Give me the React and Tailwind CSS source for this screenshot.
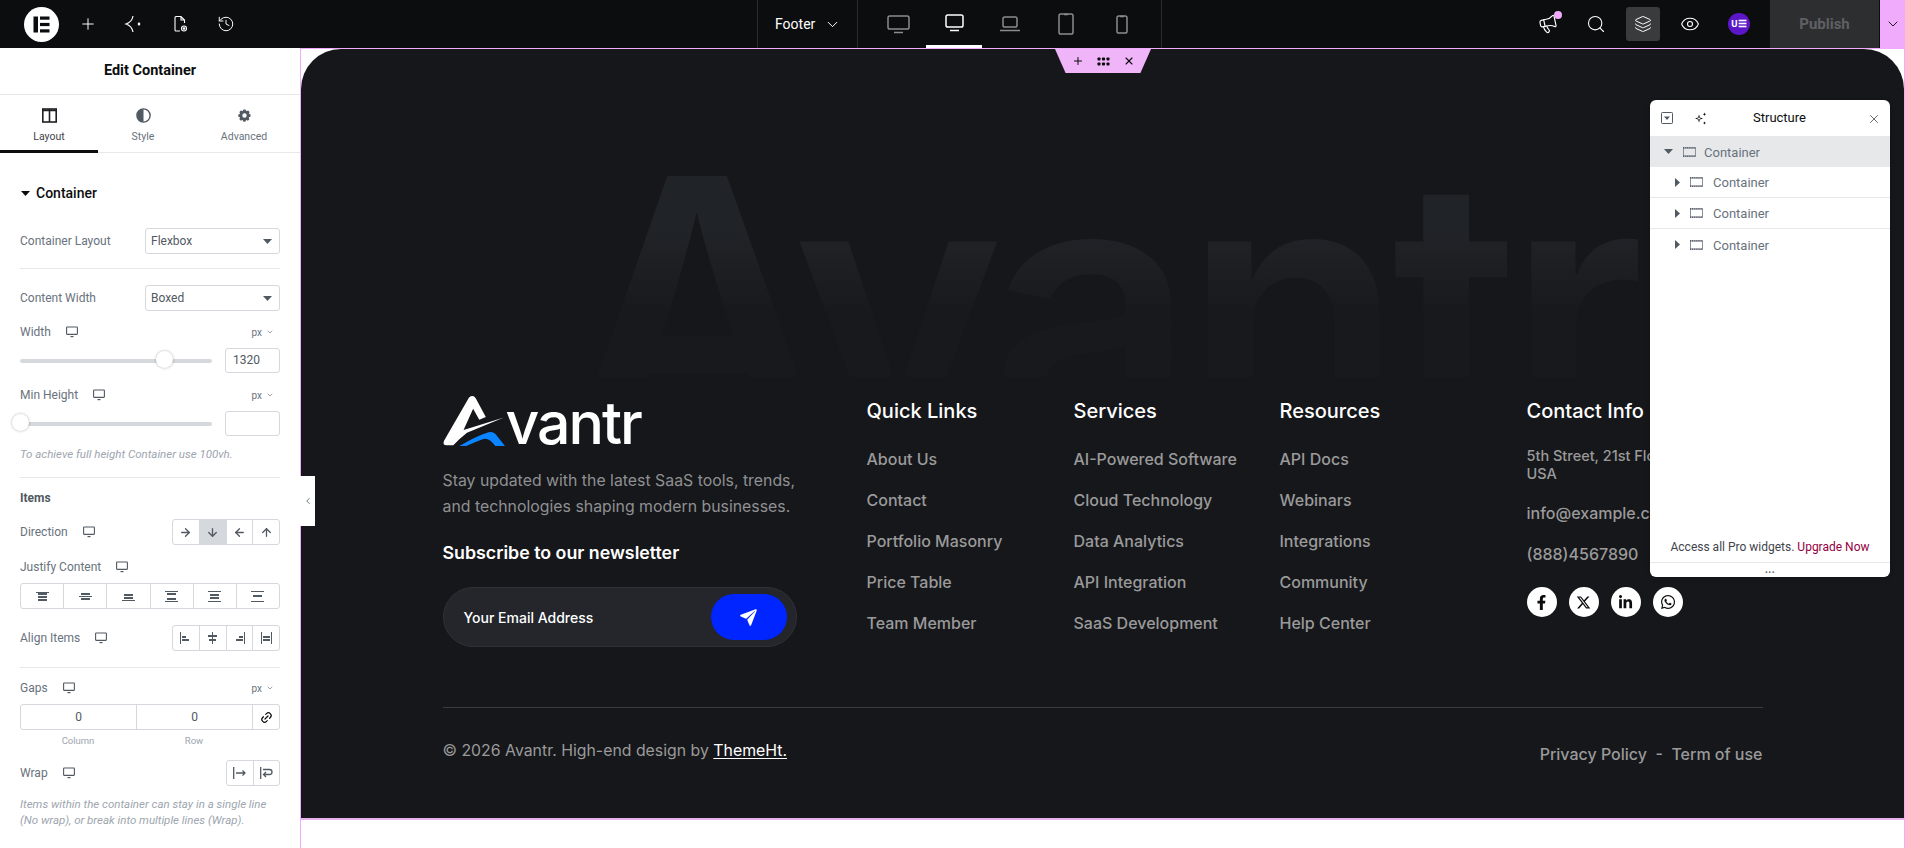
import { ArrowRight, ArrowDown, ArrowLeft, ArrowUp, ChevronDown, ChevronLeft, Plus, Search, Eye, History, Layers, Megaphone, X, Link2 } from "lucide-react";
import { FaFacebookF, FaLinkedinIn, FaWhatsapp } from "react-icons/fa";
import { FaXTwitter } from "react-icons/fa6";
import { IoPaperPlane } from "react-icons/io5";

const quickLinks = ["About Us", "Contact", "Portfolio Masonry", "Price Table", "Team Member"];
const services = ["AI-Powered Software", "Cloud Technology", "Data Analytics", "API Integration", "SaaS Development"];
const resources = ["API Docs", "Webinars", "Integrations", "Community", "Help Center"];

const Monitor = () => (
  <svg width="12" height="12" viewBox="0 0 12 12" fill="none" stroke="#515962" strokeWidth="1.1">
    <rect x="0.6" y="1" width="10.8" height="7.4" rx="0.6" />
    <path d="M4.5 10.6h3" strokeWidth="1.2" />
  </svg>
);

const Caret = ({ className }) => (
  <svg width="9" height="5" viewBox="0 0 9 5" className={className}><path d="M0 0h9L4.5 5z" fill="currentColor" /></svg>
);

const CaretRight = () => (
  <svg width="5" height="9" viewBox="0 0 5 9"><path d="M0 0l5 4.5L0 9z" fill="#515962" /></svg>
);

const ContainerIcon = () => (
  <svg width="13" height="10" viewBox="0 0 13 10" fill="none">
    <rect x="0.5" y="1" width="12" height="8" stroke="#8a9099" strokeWidth="1" />
    <path d="M0 0.8h13M0 9.2h13" stroke="#515962" strokeWidth="1.5" strokeDasharray="1.2 0.9" />
  </svg>
);

const Device = ({ w, h, screen, base, color }) => (
  <svg width={w} height={h} viewBox={`0 0 ${w} ${h}`} fill="none" stroke={color} strokeWidth="1.5">
    <rect x={screen[0]} y={screen[1]} width={screen[2]} height={screen[3]} rx="1.8" />
    {base}
  </svg>
);

const SliderRow = ({ percent, value }) => (
  <div className="flex items-center mt-[8px] h-[25px]">
    <div className="relative w-[192px] h-[4px] rounded-full bg-[#d5d8dc]">
      <div className="absolute top-[-7.5px] w-[17px] h-[17px] rounded-full bg-white shadow-[0_0_3px_rgba(0,0,0,0.3)]" style={{ left: `${percent}%`, marginLeft: "-8px" }} />
    </div>
    <div className="ml-auto w-[55px] h-[25px] border border-[#d5d8dc] rounded-[3px] pl-[7px] text-[12px] leading-[23px] text-[#515962]">{value}</div>
  </div>
);

const Label = ({ text, unit, className = "" }) => (
  <div className={`flex items-center h-[16px] text-[12px] text-[#69727d] ${className}`}>
    <span>{text}</span>
    <span className="ml-[15px] flex"><Monitor /></span>
    {unit && (
      <span className="ml-auto mr-[6px] flex items-center gap-[4px] text-[10px] text-[#69727d]">px <ChevronDown size={8} strokeWidth={2} /></span>
    )}
  </div>
);

const Select = ({ text }) => (
  <div className="ml-auto w-[135px] h-[26px] border border-[#d5d8dc] rounded-[3px] px-[5px] flex items-center justify-between text-[12px] text-[#515962]">
    {text}
    <Caret className="text-[#515962] mr-[2px]" />
  </div>
);

const Segments = ({ children, className = "" }) => (
  <div className={`flex h-[26px] border border-[#d5d8dc] rounded-[3px] divide-x divide-[#d5d8dc] overflow-hidden ${className}`}>{children}</div>
);

const Seg = ({ children, active }) => (
  <div className={`flex-1 flex items-center justify-center text-[#515962] ${active ? "bg-[#d5d8dc] text-[#0c0d0e]" : ""}`}>{children}</div>
);

const JustifyIcon = ({ lines, blocks }) => (
  <svg width="13" height="11" viewBox="0 0 13 11" fill="#515962">
    {lines.map((y) => <rect key={y} x="0" y={y} width="13" height="1" />)}
    {blocks.map((y) => <rect key={y} x="2" y={y} width="9" height="2" />)}
  </svg>
);

const AlignIcon = ({ lines, blocks }) => (
  <svg width="11" height="12" viewBox="0 0 11 12" fill="#515962">
    {lines.map((x) => <rect key={x} x={x} y="0" width="1" height="12" />)}
    {blocks.map(([x, y, bw]) => <rect key={y + "-" + x} x={x} y={y} width={bw} height="2" />)}
  </svg>
);

const Divider = ({ className = "" }) => <div className={`h-px bg-[#e6e8ea] ${className}`} />;

const LeftPanel = () => (
  <aside className="w-[300px] shrink-0 bg-white font-['Roboto',sans-serif] overflow-hidden">
    <div className="h-[47px] flex items-center justify-center text-[14.5px] font-bold text-[#0c0d0e] border-b border-[#e6e8ea]">Edit Container</div>
    <div className="relative h-[58px] flex border-b border-[#e6e8ea]">
      <div className="w-[98px] flex flex-col items-center pt-[13px] border-b-[3px] border-[#0c0d0e] h-[58px]">
        <svg width="15" height="15" viewBox="0 0 15 15" fill="none" stroke="#1f2124" strokeWidth="1.6"><rect x="0.8" y="1" width="13.4" height="13" /><path d="M0.8 2.4h13.4M7.5 1v13" /></svg>
        <span className="mt-[7px] text-[10.5px] leading-[13px] text-[#3f444b]">Layout</span>
      </div>
      <div className="w-[90px] flex flex-col items-center pt-[13px]">
        <svg width="15" height="15" viewBox="0 0 15 15"><circle cx="7.5" cy="7.5" r="6.6" fill="none" stroke="#515962" strokeWidth="1.4" /><path d="M7.5 1a6.5 6.5 0 0 0 0 13z" fill="#515962" /></svg>
        <span className="mt-[7px] text-[10.5px] leading-[13px] text-[#69727d]">Style</span>
      </div>
      <div className="w-[112px] flex flex-col items-center pt-[13px]">
        <svg width="15" height="15" viewBox="0 0 24 24" fill="#515962"><path d="M12 8.5a3.5 3.5 0 1 0 0 7 3.5 3.5 0 0 0 0-7zm9.4 5.3l-2.3 1-.3.8 1 2.3-2.4 2.4-2.3-1-.8.3-1 2.4H10.300l-1-2.400-.8-.3-2.300 1-2.400-2.400 1-2.300-.3-.8-2.400-1v-3.400l2.400-1 .3-.8-1-2.300 2.400-2.400 2.300 1 .8-.3 1-2.400h3.400l1 2.400.8.3 2.300-1 2.400 2.400-1 2.300.3.800 2.400 1z" fillRule="evenodd" /></svg>
        <span className="mt-[7px] text-[10.5px] leading-[13px] text-[#69727d]">Advanced</span>
      </div>
    </div>

    <div className="px-[20px]">
      <div className="mt-[32px] h-[16px] flex items-center text-[#0c0d0e] text-[14px] font-medium">
        <Caret className="mr-[6px] ml-px" />
        Container
      </div>
      <div className="mt-[27px] flex items-center h-[26px] text-[12px] text-[#69727d]">Container Layout<Select text="Flexbox" /></div>
      <Divider className="mt-[14px]" />
      <div className="mt-[16px] flex items-center h-[26px] text-[12px] text-[#69727d]">Content Width<Select text="Boxed" /></div>
      <Label text="Width" unit className="mt-[13px]" />
      <SliderRow percent={75} value="1320" />
      <Label text="Min Height" unit className="mt-[14px]" />
      <SliderRow percent={0} value="" />
      <div className="mt-[10px] text-[11.5px] leading-[16px] italic text-[#9da5ae]">To achieve full height Container use 100vh.</div>
      <Divider className="mt-[15px]" />
      <div className="mt-[12px] h-[16px] text-[12px] font-bold text-[#515962] leading-[16px]">Items</div>
      <div className="mt-[13px] flex items-center h-[26px]">
        <Label text="Direction" />
        <Segments className="ml-auto w-[108px]">
          <Seg><ArrowRight size={13} strokeWidth={2.4} /></Seg>
          <Seg active><ArrowDown size={13} strokeWidth={2.4} /></Seg>
          <Seg><ArrowLeft size={13} strokeWidth={2.4} /></Seg>
          <Seg><ArrowUp size={13} strokeWidth={2.4} /></Seg>
        </Segments>
      </div>
      <Label text="Justify Content" className="mt-[14px]" />
      <Segments className="mt-[8px]">
        <Seg><JustifyIcon lines={[1]} blocks={[2, 5, 8]} /></Seg>
        <Seg><JustifyIcon lines={[5]} blocks={[2, 7]} /></Seg>
        <Seg><JustifyIcon lines={[9]} blocks={[3, 6]} /></Seg>
        <Seg><JustifyIcon lines={[0, 10]} blocks={[2, 7]} /></Seg>
        <Seg><JustifyIcon lines={[0, 10]} blocks={[3, 6]} /></Seg>
        <Seg><JustifyIcon lines={[0, 10]} blocks={[4]} /></Seg>
      </Segments>
      <div className="mt-[16px] flex items-center h-[26px]">
        <Label text="Align Items" />
        <Segments className="ml-auto w-[108px]">
          <Seg><AlignIcon lines={[0]} blocks={[[2, 4, 4], [2, 7, 7]]} /></Seg>
          <Seg><AlignIcon lines={[5]} blocks={[[1, 3, 9], [2, 7, 7]]} /></Seg>
          <Seg><AlignIcon lines={[10]} blocks={[[5, 4, 4], [2, 7, 7]]} /></Seg>
          <Seg><AlignIcon lines={[0, 10]} blocks={[[2, 4, 7], [2, 7, 7]]} /></Seg>
        </Segments>
      </div>
      <Divider className="mt-[16px]" />
      <Label text="Gaps" unit className="mt-[12px]" />
      <div className="mt-[8px] flex h-[26px] border border-[#d5d8dc] rounded-[3px] divide-x divide-[#d5d8dc] text-[12px] text-[#515962]">
        <div className="w-[116px] flex items-center justify-center">0</div>
        <div className="w-[116px] flex items-center justify-center">0</div>
        <div className="flex-1 flex items-center justify-center text-[#0c0d0e]"><Link2 size={13} strokeWidth={2.2} className="-rotate-45" /></div>
      </div>
      <div className="flex mt-[3px] text-[9.5px] leading-[16px] text-[#9da5ae]">
        <span className="w-[116px] text-center">Column</span>
        <span className="w-[116px] text-center">Row</span>
      </div>
      <div className="mt-[11px] flex items-center h-[26px]">
        <Label text="Wrap" />
        <Segments className="ml-auto w-[54px]">
          <Seg>
            <svg width="13" height="12" viewBox="0 0 13 12" fill="none" stroke="#515962" strokeWidth="1.3"><path d="M0.700 0v12M3 6h9M9.500 3.500L12 6l-2.500 2.500" /></svg>
          </Seg>
          <Seg>
            <svg width="13" height="12" viewBox="0 0 13 12" fill="none" stroke="#515962" strokeWidth="1.3"><path d="M0.700 0v12M3 2.500h6.500a2.500 2.500 0 0 1 0 5H3.500M6 5L3.500 7.500 6 10" /></svg>
          </Seg>
        </Segments>
      </div>
      <div className="mt-[10px] text-[11.5px] leading-[16px] italic text-[#9da5ae]">Items within the container can stay in a single line (No wrap), or break into multiple lines (Wrap).</div>
    </div>
  </aside>
);

const TopBar = () => (
  <header className="h-[48px] shrink-0 bg-[#0c0d0e] flex items-center text-white font-['Roboto',sans-serif]">
    <div className="ml-[24px] w-[35px] h-[35px] rounded-full bg-white flex items-center justify-center">
      <svg width="17" height="17" viewBox="0 0 17 17" fill="#0c0d0e"><rect x="0.500" y="0.500" width="4.500" height="16" /><rect x="7" y="0.500" width="9.500" height="3.200" /><rect x="7" y="6.900" width="9.500" height="3.200" /><rect x="7" y="13.300" width="9.500" height="3.200" /></svg>
    </div>
    <Plus size={18} strokeWidth={1.3} className="ml-[20px]" />
    <svg width="18" height="18" viewBox="0 0 18 18" fill="none" stroke="white" strokeWidth="1.200" className="ml-[27px]"><path d="M9 1Q8 7 2 9Q8 11 9 17" /><path d="M15 7l1.500 2-1.500 2-1.500-2z" fill="white" stroke="none" /></svg>
    <svg width="18" height="18" viewBox="0 0 18 18" fill="none" stroke="white" strokeWidth="1.100" className="ml-[29px]"><path d="M9 16H5a1 1 0 0 1-1-1V2.500a1 1 0 0 1 1-1h5l3.500 3.500v3M10 1.500V5h3.500" /><circle cx="13" cy="13.500" r="2.500" /><circle cx="13" cy="13.500" r="0.800" fill="white" /></svg>
    <History size={18} strokeWidth={1.3} className="ml-[28px]" />
    <div className="ml-[522px] w-[101px] h-[48px] flex items-center border-x border-[#2a2b2d] pl-[17px] text-[14px]">
      Footer
      <ChevronDown size={17} strokeWidth={1.4} className="ml-[9px]" />
    </div>
    <div className="w-[304px] h-[48px] flex border-r border-[#2a2b2d] pl-[12px]">
      <div className="w-[56px] h-[48px] flex items-center justify-center">
        <Device w={23} h={19} screen={[1, 1, 21, 13]} color="#8a8c8f" base={<path d="M7 17.500h9" />} />
      </div>
      <div className="w-[56px] h-[48px] flex items-center justify-center border-b-[3px] border-white">
        <Device w={19} h={18} screen={[1, 1, 17, 12]} color="#ffffff" base={<path d="M5 16.500h9" />} />
      </div>
      <div className="w-[56px] h-[48px] flex items-center justify-center">
        <Device w={20} h={16} screen={[3, 1, 14, 10]} color="#8a8c8f" base={<path d="M0 14.500h20" />} />
      </div>
      <div className="w-[56px] h-[48px] flex items-center justify-center">
        <Device w={16} h={22} screen={[1, 1, 14, 20]} color="#8a8c8f" base={<path d="M6 1.500h4" />} />
      </div>
      <div className="w-[56px] h-[48px] flex items-center justify-center">
        <Device w={12} h={19} screen={[1, 1, 10, 17]} color="#8a8c8f" base={<path d="M4 1.500h4" />} />
      </div>
    </div>
    <div className="ml-auto flex items-center h-[48px]">
      <div className="relative mr-[28px]">
        <Megaphone size={20} strokeWidth={1.400} className="-rotate-12" />
        <span className="absolute -top-[3px] -right-[4px] w-[8px] h-[8px] rounded-full bg-[#f0abfc]" />
      </div>
      <Search size={20} strokeWidth={1.300} className="mr-[20px]" />
      <div className="w-[34px] h-[34px] rounded-[3px] bg-[#3a3b3d] flex items-center justify-center"><Layers size={18} strokeWidth={1.300} /></div>
      <Eye size={20} strokeWidth={1.300} className="ml-[20px]" />
      <div className="ml-[28px] w-[22px] h-[22px] rounded-full bg-[#5b16c8] flex items-center justify-center text-[9.500px] font-bold">U☰</div>
      <div className="ml-[20px] w-[109px] h-[48px] bg-[#2d2e30] flex items-center justify-center text-[15px] font-bold text-[#5f6063]">Publish</div>
      <div className="w-[25px] h-[48px] bg-[#f0abfc] ml-px flex items-center justify-center text-[#0c0d0e]"><ChevronDown size={16} strokeWidth={1.400} /></div>
    </div>
  </header>
);

const StructurePanel = () => (
  <div className="absolute right-[14px] top-[51px] w-[240px] h-[477px] bg-white rounded-[6px] flex flex-col font-['Roboto',sans-serif] shadow-[0_0_4px_rgba(0,0,0,0.3)]">
    <div className="relative h-[36px] flex items-center text-[#0c0d0e]">
      <svg width="12" height="12" viewBox="0 0 12 12" fill="none" stroke="#515962" className="ml-[11px]"><rect x="0.500" y="0.500" width="11" height="11" rx="0.800" /><path d="M3 4.500h6L6 8z" fill="#515962" stroke="none" /></svg>
      <svg width="13" height="13" viewBox="0 0 13 13" fill="#0c0d0e" className="ml-[21px]"><path d="M5 2.500l1 3 3 1-3 1-1 3-1-3-3-1 3-1zM5 4.500l-.5 1.500-1.500.5 1.500.5.5 1.500.5-1.500 1.500-.5-1.500-.5z" fillRule="evenodd" /><path d="M10.500 0.500l.5 1.300 1.300.5-1.300.5-.5 1.200-.5-1.200-1.200-.5 1.200-.5zM10.500 9.500l.5 1 1 .5-1 .5-.5 1-.5-1-1-.5 1-.5z" /></svg>
      <span className="absolute left-[103px] text-[13px]">Structure</span>
      <X size={14} strokeWidth={1.500} className="ml-auto mr-[9px] mt-[2px] text-[#515962]" />
    </div>
    <div className="h-[31px] bg-[#e6e8ea] flex items-center pl-[14px] text-[13px] text-[#69727d]">
      <Caret className="text-[#515962] mr-[10px]" />
      <ContainerIcon />
      <span className="ml-[8px] mt-[2px]">Container</span>
    </div>
    {[0, 1, 2].map((i) => (
      <div key={i} className={`h-[31px] flex items-center pl-[25px] text-[13px] text-[#69727d] ${i < 2 ? "border-b border-[#e6e8ea]" : ""}`}>
        <CaretRight />
        <span className="ml-[10px] flex"><ContainerIcon /></span>
        <span className="ml-[10px] mt-[2px]">Container</span>
      </div>
    ))}
    <div className="mt-auto h-[33px] pt-[2px] flex items-center justify-center text-[12px] text-[#3f444b]">
      Access all Pro widgets.&nbsp;<span className="text-[#93003f]">Upgrade Now</span>
    </div>
    <div className="h-[15px] border-t border-[#e6e8ea] flex items-center justify-center">
      <span className="text-[#515962] text-[10px] leading-[8px] font-bold tracking-[0.5px]">...</span>
    </div>
  </div>
);

const LinkColumn = ({ title, links, className }) => (
  <div className={`shrink-0 ${className}`}>
    <h4 className="text-[20px] leading-[28px] font-medium text-white">{title}</h4>
    <ul className="mt-[22px] flex flex-col gap-[17px]">
      {links.map((link) => (
        <li key={link} className="text-[16px] leading-[24px] font-medium text-[#9a9a9a]">{link}</li>
      ))}
    </ul>
  </div>
);

const Logo = () => (
  <div className="flex items-end h-[50px]">
    <svg width="63" height="52" viewBox="12 18 184 152" className="shrink-0">
      <path d="M88 25Q100 16 108 28L137 82L118 90L100 58L72 120L190 84L82 128Q60 145 42 165H22Q10 165 15 152Z" fill="#fff" />
      <path d="M60 167Q110 138 145 127Q160 123 170 138L193 167H165Q145 140 128 147Q105 155 80 167Z" fill="#0a84ff" />
    </svg>
    <span className="text-[59px] leading-[50px] font-medium text-white tracking-[-2px] h-[50px] translate-y-[1px]">vantr</span>
  </div>
);

const Footer = () => (
  <footer className="relative h-[769px] rounded-t-[40px] bg-[#16171b] font-['Inter',sans-serif] overflow-hidden">
    <div className="absolute inset-x-0 top-[38px] flex justify-center overflow-hidden h-[290px]">
      <span className="text-[360px] leading-[440px] font-semibold tracking-[-12px] whitespace-nowrap bg-linear-to-b from-[#202327] from-[50%] to-[#18191d] to-[78%] bg-clip-text text-transparent">Avantr</span>
    </div>
    <div className="relative w-[1320px] mx-auto pt-[348px]">
      <div className="flex h-[310px]">
        <div className="w-[424px] shrink-0">
          <Logo />
          <p className="mt-[21px] text-[15.85px] leading-[26px] text-[#8f9092] w-[360px]">Stay updated with the latest SaaS tools, trends, and technologies shaping modern businesses.</p>
          <h4 className="mt-[20px] text-[17.8px] leading-[26px] font-semibold text-white">Subscribe to our newsletter</h4>
          <div className="mt-[21px] w-[354px] h-[60px] rounded-full bg-[#24262b] border border-[#2f3136] flex items-center pl-[20px] pr-[9px]">
            <span className="text-[14px] font-medium text-white">Your Email Address</span>
            <div className="ml-auto w-[76px] h-[46px] rounded-full bg-[#0025ff] flex items-center justify-center text-white"><IoPaperPlane size={19} /></div>
          </div>
        </div>
        <LinkColumn title="Quick Links" links={quickLinks} className="w-[207px]" />
        <LinkColumn title="Services" links={services} className="w-[206px]" />
        <LinkColumn title="Resources" links={resources} className="w-[247px]" />
        <div className="flex-1 whitespace-nowrap">
          <h4 className="text-[20px] leading-[28px] font-medium text-white">Contact Info</h4>
          <p className="mt-[22px] text-[14.500px] leading-[18px] font-medium text-[#9a9a9a]">5th Street, 21st Floor, New York<br />USA</p>
          <p className="mt-[18px] text-[16px] leading-[24px] font-medium text-[#9a9a9a]">info@example.com</p>
          <p className="mt-[17px] text-[16px] leading-[24px] font-medium text-[#9a9a9a]">(888)4567890</p>
          <div className="mt-[21px] flex gap-[12px]">
            {[FaFacebookF, FaXTwitter, FaLinkedinIn, FaWhatsapp].map((Icon, i) => (
              <div key={i} className="w-[30px] h-[30px] rounded-full bg-white flex items-center justify-center text-[#0c0d0e]"><Icon size={i === 3 ? 16 : 15} /></div>
            ))}
          </div>
        </div>
      </div>
      <div className="h-px bg-[#3a3b3e]" />
      <div className="flex mt-[31px] text-[15.85px] leading-[24px] text-[#9a9a9a]">
        <p>© 2026 Avantr. High-end design by <span className="text-white underline underline-offset-2">ThemeHt.</span></p>
        <p className="ml-auto mt-[3px] text-[16px] font-medium">Privacy Policy&nbsp; -&nbsp; Term of use</p>
      </div>
    </div>
  </footer>
);

export default function App() {
  return (
    <div className="h-screen overflow-hidden flex flex-col bg-white">
      <TopBar />
      <div className="flex flex-1 min-h-0">
        <LeftPanel />
        <main className="relative flex-1 border-l border-r border-[#f0abfc] border-t bg-white">
          <Footer />
          <div className="h-[2px] bg-[#e6b3ef]" />
          <div className="absolute left-[754px] top-0 w-[96px] h-[24px] bg-[#f0b4f8] flex items-center justify-center gap-[13px] [clip-path:polygon(0_0,100%_0,89%_100%,11%_100%)] text-[#0c0d0e]">
            <Plus size={12} strokeWidth={2} />
            <svg width="13" height="9" viewBox="0 0 13 9" fill="#0c0d0e">
              <rect x="0.500" y="0.500" width="3" height="3" rx="0.800" /><rect x="5" y="0.500" width="3" height="3" rx="0.800" /><rect x="9.500" y="0.500" width="3" height="3" rx="0.800" />
              <rect x="0.500" y="5.500" width="3" height="3" rx="0.800" /><rect x="5" y="5.500" width="3" height="3" rx="0.800" /><rect x="9.500" y="5.500" width="3" height="3" rx="0.800" />
            </svg>
            <X size={12} strokeWidth={2.200} />
          </div>
          <div className="absolute -left-px top-[427px] w-[15px] h-[50px] bg-white flex items-center justify-center text-[#515962]"><ChevronLeft size={10} strokeWidth={2} /></div>
          <StructurePanel />
        </main>
      </div>
    </div>
  );
}
